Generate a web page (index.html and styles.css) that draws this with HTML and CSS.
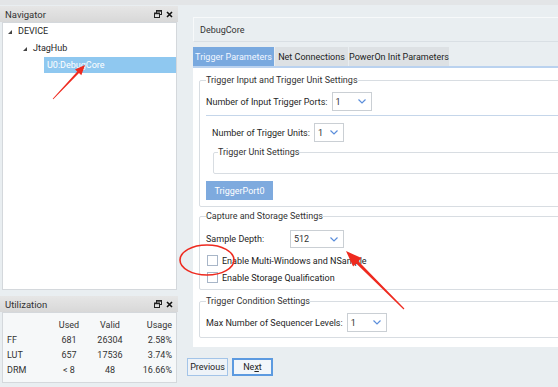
FILE: index.html
```html
<!DOCTYPE html>
<html lang="en">
<head>
  <meta charset="UTF-8">
  <title>DebugCore</title>
  <link rel="stylesheet" href="styles.css">
</head>
<body>
  <div class="topbar"></div>

  <div class="layout">
    <aside class="side">
      <section class="panel">
        <div class="panel-head">
          <span>Navigator</span>
          <span class="head-icons">
            <svg width="8" height="8" viewBox="0 0 8 8"><rect x="2.5" y="0.5" width="5" height="4" fill="none" stroke="#222"/><rect x="0.5" y="3" width="5" height="4.5" fill="#e0e0e0" stroke="#222"/><rect x="0.5" y="3" width="5" height="1.2" fill="#222"/><rect x="2.5" y="0.5" width="5" height="1.2" fill="#222"/></svg>
            <svg width="7" height="7" viewBox="0 0 7 7"><path d="M1 1L6 6M6 1L1 6" stroke="#111" stroke-width="1.6"/></svg>
          </span>
        </div>
        <div class="panel-body tree">
          <div class="node lvl0"><span class="tri"></span>DEVICE</div>
          <div class="node lvl1"><span class="tri"></span>JtagHub</div>
          <div class="node lvl2 selected">U0:DebugCore</div>
        </div>
      </section>

      <section class="panel util">
        <div class="panel-head">
          <span>Utilization</span>
          <span class="head-icons">
            <svg width="8" height="8" viewBox="0 0 8 8"><rect x="2.5" y="0.5" width="5" height="4" fill="none" stroke="#222"/><rect x="0.5" y="3" width="5" height="4.5" fill="#e0e0e0" stroke="#222"/><rect x="0.5" y="3" width="5" height="1.2" fill="#222"/><rect x="2.5" y="0.5" width="5" height="1.2" fill="#222"/></svg>
            <svg width="7" height="7" viewBox="0 0 7 7"><path d="M1 1L6 6M6 1L1 6" stroke="#111" stroke-width="1.6"/></svg>
          </span>
        </div>
        <div class="panel-body util-grid">
          <span></span><span class="c">Used</span><span class="c">Valid</span><span class="r">Usage</span>
          <span>FF</span><span class="c">681</span><span class="c">26304</span><span class="r">2.58%</span>
          <span>LUT</span><span class="c">657</span><span class="c">17536</span><span class="r">3.74%</span>
          <span>DRM</span><span class="c">&lt; 8</span><span class="c">48</span><span class="r">16.66%</span>
        </div>
      </section>
    </aside>

    <main class="content">
      <div class="title-box">DebugCore</div>

      <div class="tabs">
        <div class="tab active">Trigger Parameters</div>
        <div class="tab">Net Connections</div>
        <div class="tab wide">PowerOn Init Parameters</div>
      </div>

      <div class="tab-page">
        <fieldset class="group first">
          <legend>Trigger Input and Trigger Unit Settings</legend>
          <div class="row r1">
            <span>Number of Input Trigger Ports:</span>
            <div class="combo w40"><span>1</span><svg width="8" height="5" viewBox="0 0 8 5"><path d="M0.5 0.5L4 4L7.5 0.5" fill="none" stroke="#5b8edb" stroke-width="1.2"/></svg></div>
          </div>
          <div class="sep"></div>
          <div class="row r2">
            <span>Number of Trigger Units:</span>
            <div class="combo w30"><span>1</span><svg width="8" height="5" viewBox="0 0 8 5"><path d="M0.5 0.5L4 4L7.5 0.5" fill="none" stroke="#5b8edb" stroke-width="1.2"/></svg></div>
          </div>
          <fieldset class="group inner">
            <legend>Trigger Unit Settings</legend>
          </fieldset>
          <button class="port-btn" type="button">TriggerPort0</button>
        </fieldset>

        <fieldset class="group second">
          <legend>Capture and Storage Settings</legend>
          <div class="row r3">
            <span class="fixed">Sample Depth:</span>
            <div class="combo w54"><span>512</span><svg width="8" height="5" viewBox="0 0 8 5"><path d="M0.5 0.5L4 4L7.5 0.5" fill="none" stroke="#5b8edb" stroke-width="1.2"/></svg></div>
          </div>
          <label class="check first-check"><span class="box"></span>Enable Multi-Windows and NSample</label>
          <label class="check"><span class="box"></span>Enable Storage Qualification</label>
        </fieldset>

        <fieldset class="group third">
          <legend>Trigger Condition Settings</legend>
          <div class="row r4">
            <span>Max Number of Sequencer Levels:</span>
            <div class="combo w40"><span>1</span><svg width="8" height="5" viewBox="0 0 8 5"><path d="M0.5 0.5L4 4L7.5 0.5" fill="none" stroke="#5b8edb" stroke-width="1.2"/></svg></div>
          </div>
        </fieldset>
      </div>

      <div class="wizard">
        <button class="wiz-btn" type="button">Previous</button>
        <button class="wiz-btn focus" type="button">Ne<u>x</u>t</button>
      </div>
    </main>
  </div>

  <!-- red annotation marks drawn over the screenshot -->
  <svg class="marks" width="558" height="387" viewBox="0 0 558 387">
    <polygon points="53.3,99.3 79,73.1 81.3,75.2 85,65 75,69.4 77.3,71.5 52.7,98.7" fill="#ee2a1f"/>
    <ellipse cx="207" cy="260" rx="27" ry="15" fill="none" stroke="#ee2a1f" stroke-width="1.6"/>
    <polygon points="404.4,308.6 358.4,261.2 361.5,258.1 346,251 353.1,266.5 356.2,263.4 403.6,309.4" fill="#ee2a1f"/>
  </svg>
</body>
</html>
```

FILE: styles.css
```css
* {
  box-sizing: border-box;
}

body {
  margin: 0;
  width: 558px;
  height: 387px;
  overflow: hidden;
  position: relative;
  background: #e9eef1;
  font-family: Roboto, "Liberation Sans", sans-serif;
  font-size: 9px;
  color: #262626;
}

.topbar {
  height: 5px;
  background: #e3e5e7;
}

.layout {
  display: flex;
  height: 382px;
}

/* left column */
.side {
  width: 178px;
  padding-top: 1px;
  display: flex;
  flex-direction: column;
}

.panel-head {
  height: 16px;
  display: flex;
  align-items: center;
  justify-content: space-between;
  padding: 0 5px;
  background: linear-gradient(#e6e6e6, #d8d8d8);
  color: #333;
  font-size: 9.5px;
}

.head-icons {
  display: flex;
  align-items: center;
  gap: 4px;
}

.panel-body {
  margin-left: 2px;
  width: 175px;
  border: 1px solid #d4d8dc;
  background: #fff;
}

.tree {
  height: 268px;
}

.node {
  height: 17px;
  line-height: 17px;
  display: flex;
  align-items: center;
}

.lvl0 {
  padding-left: 5px;
}

.lvl1 {
  padding-left: 20px;
}

.tri {
  width: 0;
  height: 0;
  margin-right: 6px;
  border-left: 4px solid transparent;
  border-bottom: 4px solid #444;
}

.selected {
  margin-left: 41px;
  height: 16px;
  padding-left: 3px;
  background: #8fc8f0;
  color: #fff;
}

.util {
  margin-top: 6px;
}

.util-grid {
  height: 71px;
  padding: 4px 0 0 4px;
  background: #f6f8f9;
  display: grid;
  grid-template-columns: 41px 42px 40px 42px;
  grid-auto-rows: 15px;
  align-items: center;
  color: #333;
}

.util-grid .c {
  text-align: center;
}

.util-grid .r {
  text-align: right;
}

/* right column */
.content {
  flex: 1;
  min-width: 0;
}

.title-box {
  margin: 12px 0 0 15px;
  height: 25px;
  padding-left: 6px;
  display: flex;
  align-items: center;
  border: 1px solid #f7f9fa;
  border-bottom-color: #d9dfe4;
  border-right: none;
  color: #333;
}

.tabs {
  margin: 5px 0 0 15px;
  display: flex;
  gap: 1px;
  border-bottom: 2px solid #bad2ef;
}

.tab {
  width: 73px;
  height: 19px;
  display: flex;
  align-items: center;
  justify-content: center;
  background: #dde1e4;
  color: #222;
}

.tab.active {
  width: 81px;
  background: #79a9df;
  color: #f2f7ff;
}

.tab.wide {
  width: 100px;
}

.tab-page {
  margin-left: 15px;
  height: 279px;
  padding-left: 6px;
  background: #fff;
  overflow: hidden;
}

.group {
  margin: 0 -30px 0 0;
  padding: 0 0 0 6px;
  border: 1px solid #d8dde2;
  border-radius: 2px;
  min-width: 0;
}

.group legend {
  padding: 0;
  height: 12px;
  line-height: 12px;
  color: #333;
}

.group.first {
  margin-top: 6px;
  padding-bottom: 6px;
}

.group.second {
  margin-top: 3px;
  padding-bottom: 3px;
}

.group.third {
  margin-top: 5px;
  padding-bottom: 5px;
}

.row {
  display: flex;
  align-items: center;
  gap: 4px;
}

.r1 {
  margin-top: 6px;
}

.r2 {
  margin-top: 7px;
  padding-left: 6px;
}

.r3 {
  margin-top: 8px;
  gap: 0;
}

.r4 {
  margin-top: 6px;
}

.fixed {
  width: 84px;
}

.sep {
  margin-top: 4px;
  height: 1px;
  background: #c5d6ea;
}

.combo {
  height: 19px;
  display: flex;
  align-items: center;
  justify-content: space-between;
  padding: 0 5px 0 3px;
  border: 1px solid #cacfd4;
  background: #fff;
  color: #333;
}

.w30 {
  width: 30px;
}

.w40 {
  width: 40px;
}

.w54 {
  width: 54px;
  height: 18px;
}

.group.inner {
  margin: 4px 0 0 7px;
  padding: 0 0 15px 4px;
}

.port-btn {
  display: block;
  margin-top: 7px;
  width: 67px;
  height: 19px;
  padding: 0;
  border: none;
  background: #7eaade;
  color: #fff;
  font: inherit;
}

.check {
  height: 17px;
  display: flex;
  align-items: center;
  gap: 4px;
  color: #222;
}

.first-check {
  margin-top: 4px;
}

.box {
  width: 11px;
  height: 11px;
  margin-left: 1px;
  border: 1px solid #a8b6c8;
  background: #fff;
}

.wizard {
  margin: 11px 0 0 9px;
  display: flex;
  gap: 4px;
}

.wiz-btn {
  width: 41px;
  height: 18px;
  padding: 0;
  border: 1px solid #a3c4e8;
  background: #eef3f8;
  color: #222;
  font: inherit;
}

.wiz-btn.focus {
  border: 2px solid #5c9ae0;
  background: #f2f6fa;
}

.marks {
  position: absolute;
  left: 0;
  top: 0;
  pointer-events: none;
}
```
